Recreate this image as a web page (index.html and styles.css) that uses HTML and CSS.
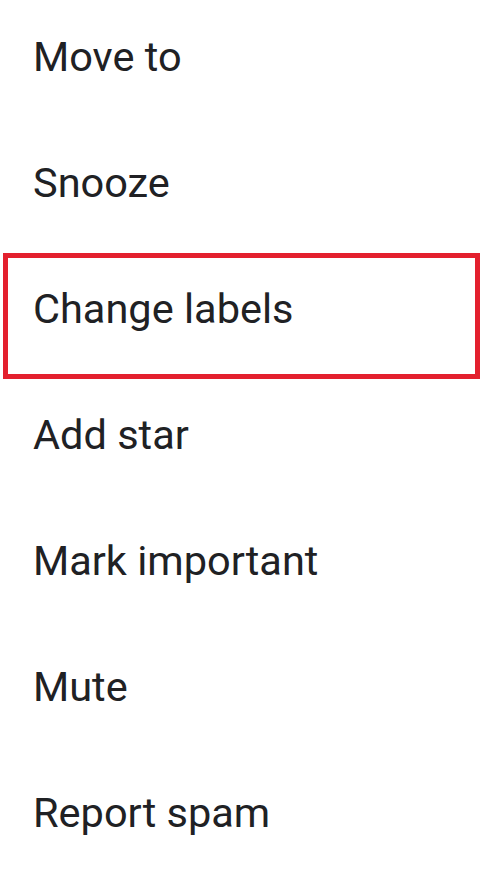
FILE: index.html
```html
<!DOCTYPE html>
<html>
<head>
<meta charset="utf-8">
<link rel="stylesheet" href="styles.css">
</head>
<body>
<ul class="menu">
  <li class="item">Move to</li>
  <li class="item">Snooze</li>
  <li class="item item--highlight">Change labels</li>
  <li class="item">Add star</li>
  <li class="item">Mark important</li>
  <li class="item">Mute</li>
  <li class="item">Report spam</li>
</ul>
</body>
</html>
```
FILE: styles.css
```css
html, body {
  margin: 0;
  padding: 0;
  background: #ffffff;
}
.menu {
  list-style: none;
  margin: 0;
  padding: 1px 0 0 3px;
  display: flex;
  flex-direction: column;
}
.item {
  box-sizing: border-box;
  width: 477px;
  height: 126px;
  border: 5px solid transparent;
  padding: 26px 0 0 25px;
  font-family: Roboto, "Noto Sans", sans-serif;
  font-size: 41.5px;
  line-height: 50px;
  color: #202124;
}
.item--highlight {
  border-color: #e3202e;
}
```
